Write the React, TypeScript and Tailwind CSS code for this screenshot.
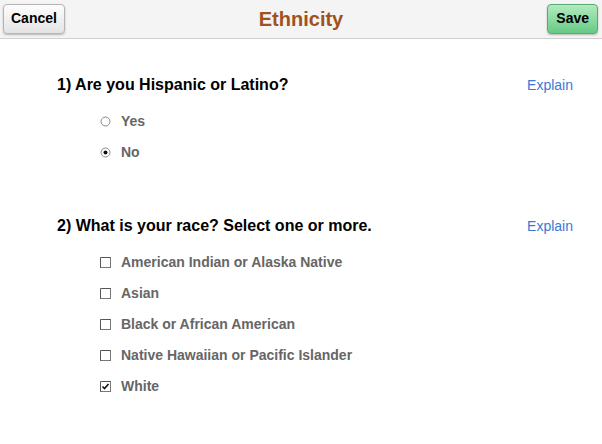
import React from "react";

function Radio({ checked }: { checked?: boolean }) {
  return (
    <svg width="11" height="11" viewBox="0 0 11 11" className="shrink-0">
      <circle cx="5.5" cy="5.5" r="4.5" fill="#fff" stroke="#888" strokeWidth="1" />
      {checked && <circle cx="5.5" cy="5.5" r="2" fill="#111" />}
    </svg>
  );
}

function Check({ checked }: { checked?: boolean }) {
  return (
    <svg width="11" height="11" viewBox="0 0 11 11" className="shrink-0">
      <rect x="0.5" y="0.5" width="10" height="10" fill="#fff" stroke="#777" />
      <path d="M1.5 0.5H10.5M0.5 1.5V10.5" stroke="#555" />
      {checked && <path d="M2.5 5.5L4.5 7.5L8.5 3" stroke="#111" strokeWidth="1.6" fill="none" />}
    </svg>
  );
}

function Option({ kind, checked, label }: { kind: "radio" | "check"; checked?: boolean; label: string }) {
  return (
    <div className="flex h-[31px] items-center gap-[10px] pl-[100px]">
      {kind === "radio" ? <Radio checked={checked} /> : <Check checked={checked} />}
      <span className="text-[14px] font-bold text-[#666666]">{label}</span>
    </div>
  );
}

function Question({ text }: { text: string }) {
  return (
    <div className="flex items-center justify-between pl-[57px] pr-[29px]">
      <span className="text-[16px] font-bold text-black">{text}</span>
      <span className="text-[14px] text-[#3b78d8]">Explain</span>
    </div>
  );
}

export default function App() {
  return (
    <div className="h-[444px] w-[602px] bg-white" style={{ fontFamily: '"Liberation Sans", Arial, sans-serif' }}>
      <div className="grid h-[39px] grid-cols-[1fr_auto_1fr] items-center border-b border-[#cfcfcf] bg-[#f4f4f4] px-[3px] pb-[1px]">
        <div className="flex justify-start">
          <button className="h-[30px] rounded-[4px] border border-[#b5b5b5] bg-gradient-to-b from-[#fdfdfd] to-[#e4e4e4] px-[7px] text-[14px] font-bold text-black shadow-[0_1px_2px_rgba(0,0,0,0.25)]">
            Cancel
          </button>
        </div>
        <span className="text-[20px] font-bold text-[#9f5220]">Ethnicity</span>
        <div className="flex justify-end">
          <button className="mr-[1px] h-[30px] rounded-[4px] border border-[#55ad70] bg-gradient-to-b from-[#b2eac0] to-[#66c985] px-[8px] text-[14px] font-bold text-black shadow-[0_1px_2px_rgba(0,0,0,0.25)]">
            Save
          </button>
        </div>
      </div>
      <div className="pt-[34px]">
        <Question text="1) Are you Hispanic or Latino?" />
        <div className="pt-[9px]">
          <Option kind="radio" label="Yes" />
          <Option kind="radio" checked label="No" />
        </div>
        <div className="pt-[46px]">
          <Question text="2) What is your race? Select one or more." />
        </div>
        <div className="pt-[9px]">
          <Option kind="check" label="American Indian or Alaska Native" />
          <Option kind="check" label="Asian" />
          <Option kind="check" label="Black or African American" />
          <Option kind="check" label="Native Hawaiian or Pacific Islander" />
          <Option kind="check" checked label="White" />
        </div>
      </div>
    </div>
  );
}
